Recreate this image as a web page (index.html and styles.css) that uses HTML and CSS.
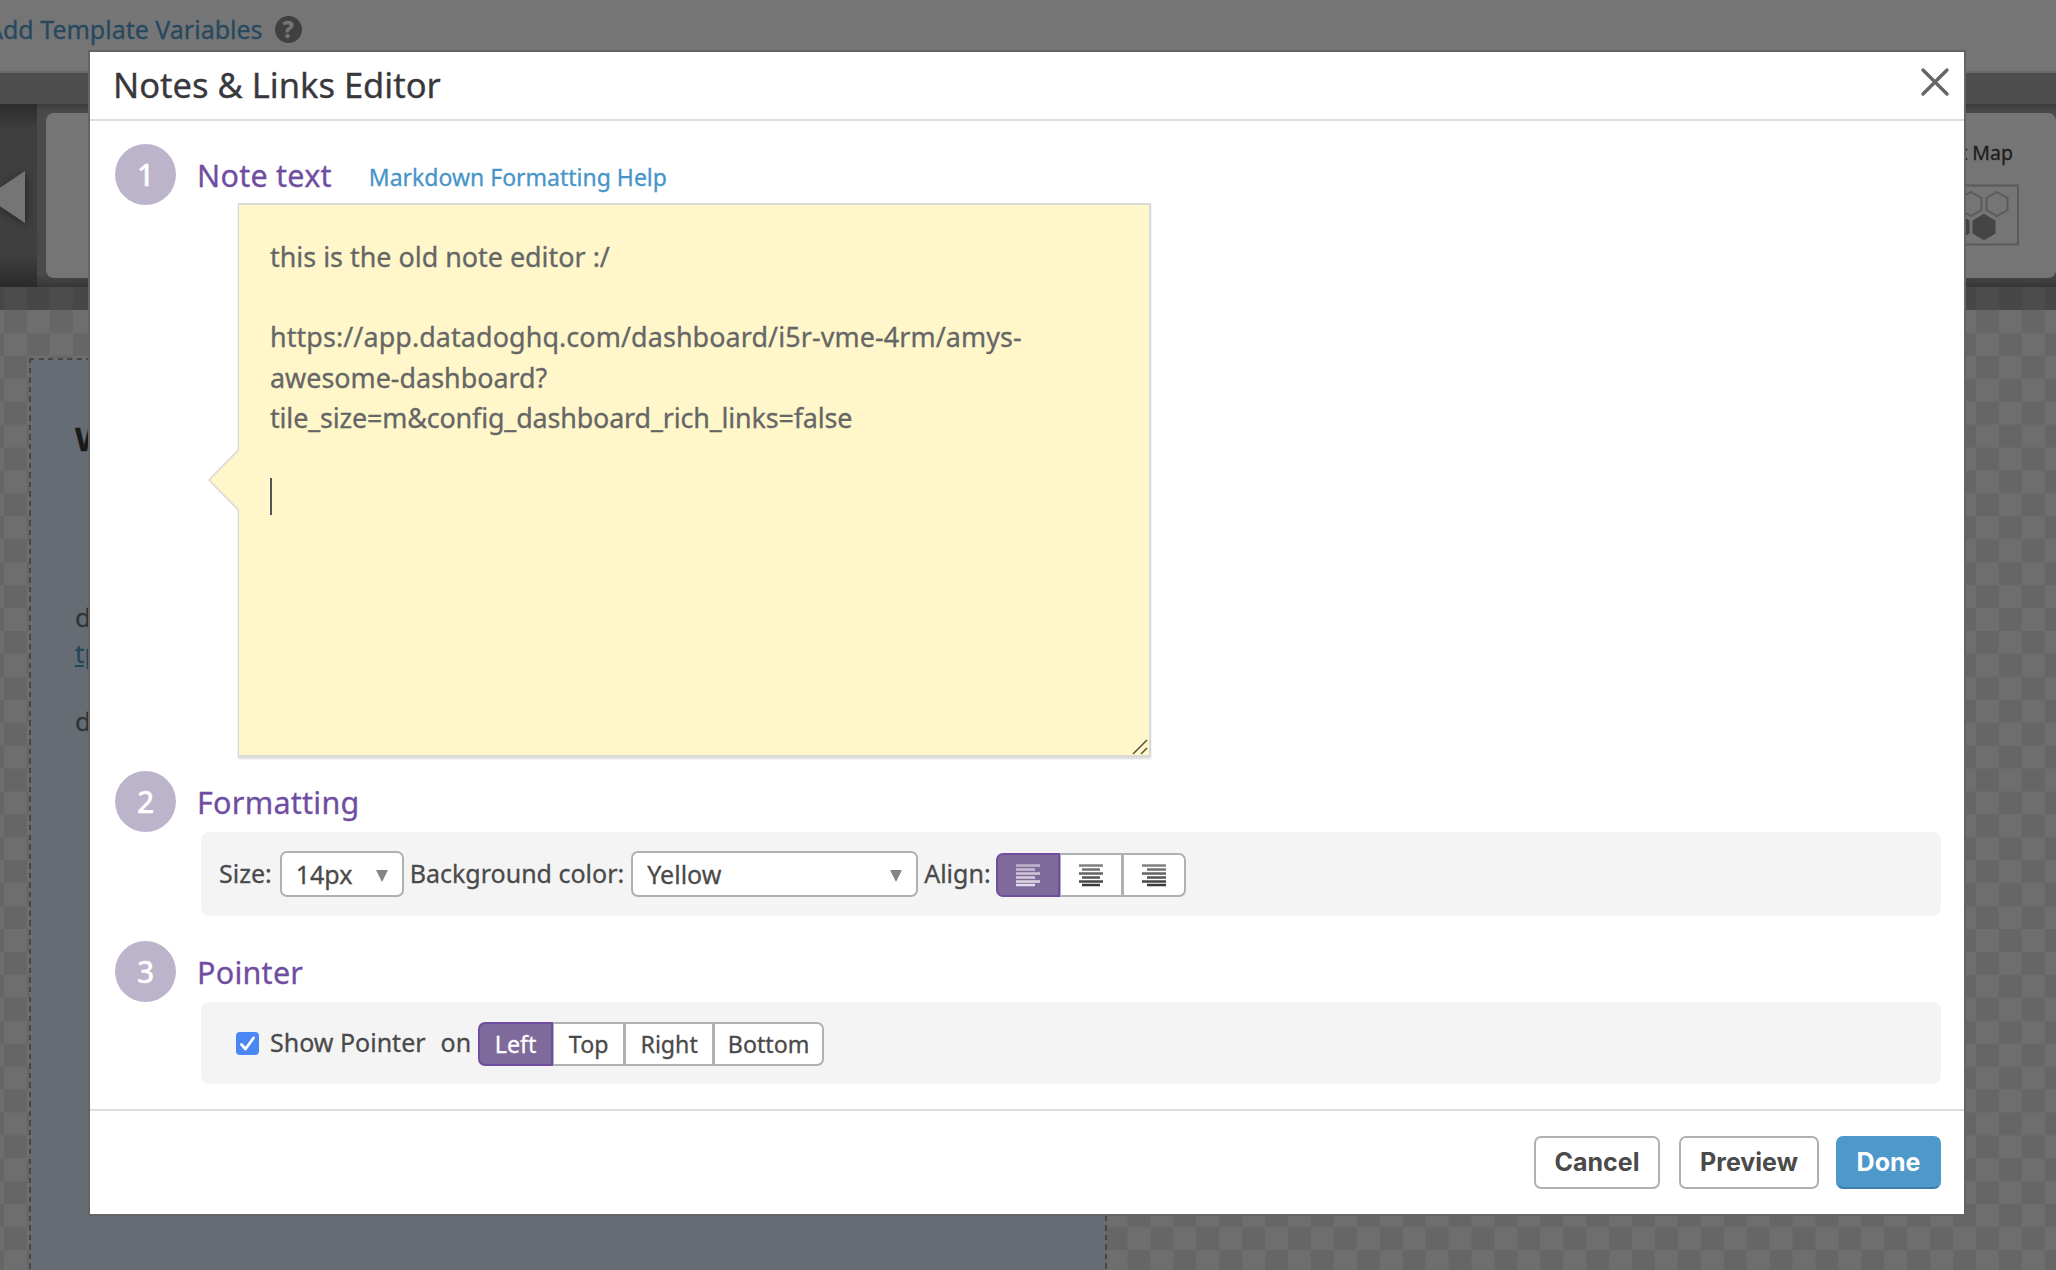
FILE: index.html
```
<!DOCTYPE html>
<html lang="en">
<head>
<meta charset="utf-8">
<title>Notes &amp; Links Editor</title>
<link rel="stylesheet" href="styles.css">
</head>
<body>
<div class="page">
  <div class="topbar">
    <span class="add-vars">Add Template Variables</span>
    <span class="help">?</span>
  </div>
  <div class="subbar"></div>
  <div class="tray">
    <div class="tray-prev">
      <svg width="37" height="183" viewBox="0 0 37 183"><path d="M25 67V119L-14 93Z" fill="#757575"/></svg>
    </div>
    <div class="tray-card">
      <span class="tray-label">Host Map</span>
      <svg class="tray-icon" width="76" height="62" viewBox="0 0 76 62" fill="none" stroke="#5a5a5a" stroke-width="2">
        <rect x="1" y="1.5" width="74" height="59"/>
        <path d="M28 8l10.500 6v12l-10.500 6l-10.500-6v-12zM54 8l10.500 6v12l-10.500 6l-10.500-6v-12z"/>
        <path d="M15 31l10.500 6v12l-10.500 6l-10.500-6v-12zM41 31l10.500 6v12l-10.500 6l-10.500-6v-12z" fill="#454545" stroke="#454545"/>
      </svg>
    </div>
  </div>
  <div class="board">
    <div class="board-shade"></div>
    <div class="widget">
      <div class="widget-title">W</div>
      <div class="widget-text">d</div>
      <div class="widget-link">tp</div>
      <div class="widget-text widget-last">d</div>
    </div>
  </div>
</div>

<div class="modal">
  <header class="modal-head">
    <h1>Notes &amp; Links Editor</h1>
    <svg width="30" height="30" viewBox="0 0 30 30" stroke="#666" stroke-width="3.400" stroke-linecap="round"><path d="M3 3L27 27M27 3L3 27"/></svg>
  </header>

  <main class="modal-body">
    <section>
      <div class="step"><span class="num">1</span><h2>Note text</h2><a class="md-help">Markdown Formatting Help</a></div>
      <div class="note">
        <svg class="note-pointer" width="33" height="64" viewBox="0 0 33 64"><path d="M33 1.500L31.500 2L2 32L31.500 62L33 62.500Z" fill="#fff7ca"/><path d="M31.500 2L2 32L31.500 62" fill="none" stroke="#d8d8d8" stroke-width="1.500"/></svg>
        <div class="note-text">this is the old note editor :/

<span class="url">https://app.datadoghq.com/dashboard/i5r-vme-4rm/amys-</span>
awesome-dashboard?
<span class="query">tile_size=m&amp;config_dashboard_rich_links=false</span>
</div>
        <div class="caret"></div>
        <svg class="grip" width="16" height="16" viewBox="0 0 16 16" stroke="#55533f" stroke-width="1.500"><path d="M1 15L15 1M9 15L15 9"/></svg>
      </div>
    </section>

    <section class="formatting">
      <div class="step"><span class="num">2</span><h2>Formatting</h2></div>
      <div class="panel panel-format">
        <span class="lbl">Size:</span>
        <span class="select size-select">14px<i></i></span>
        <span class="lbl">Background color:</span>
        <span class="select color-select">Yellow<i></i></span>
        <span class="lbl">Align:</span>
        <div class="group align-group">
          <span class="seg on"><svg width="24" height="23" viewBox="0 0 24 23"><defs><linearGradient id="light" gradientUnits="userSpaceOnUse" x1="0" y1="0" x2="0" y2="23"><stop offset="0" stop-color="#beb2cc"/><stop offset="1" stop-color="#e5e1eb"/></linearGradient></defs><path stroke="url(#light)" stroke-width="2.500" d="M0 1.500H24M0 5.500H19M0 9.500H24M0 13.500H19M0 17.500H24M0 21H19"/></svg></span>
          <span class="seg"><svg width="24" height="23" viewBox="0 0 24 23"><defs><linearGradient id="dark" gradientUnits="userSpaceOnUse" x1="0" y1="0" x2="0" y2="23"><stop offset="0" stop-color="#858585"/><stop offset="1" stop-color="#333"/></linearGradient></defs><path stroke="url(#dark)" stroke-width="2.500" d="M0 1.500H24M3 5.500H21M0 9.500H24M3 13.500H21M0 17.500H24M3 21H21"/></svg></span>
          <span class="seg"><svg width="24" height="23" viewBox="0 0 24 23"><path stroke="url(#dark)" stroke-width="2.500" d="M0 1.500H24M5 5.500H24M0 9.500H24M5 13.500H24M0 17.500H24M5 21H24"/></svg></span>
        </div>
      </div>
    </section>

    <section class="pointer">
      <div class="step"><span class="num">3</span><h2>Pointer</h2></div>
      <div class="panel panel-pointer">
        <span class="check"><svg width="23" height="23" viewBox="0 0 23 23" fill="none" stroke="#fff" stroke-width="2.800" stroke-linecap="round" stroke-linejoin="round"><path d="M5.500 12.500L9.500 17L17.500 6"/></svg></span>
        <span class="lbl show">Show Pointer</span>
        <span class="lbl">on</span>
        <div class="group side-group">
          <span class="seg on">Left</span><span class="seg">Top</span><span class="seg">Right</span><span class="seg">Bottom</span>
        </div>
      </div>
    </section>
  </main>

  <footer class="modal-foot">
    <button class="btn cancel">Cancel</button>
    <button class="btn preview">Preview</button>
    <button class="btn done">Done</button>
  </footer>
</div>
</body>
</html>
```
FILE: styles.css
```
* { box-sizing: border-box; }
body {
  margin: 0;
  width: 2056px;
  height: 1270px;
  overflow: hidden;
  position: relative;
  font-family: "Noto Sans", sans-serif;
  color: #4a4a4a;
  -webkit-text-stroke: .3px;
}
svg { display: block; }

/* dimmed dashboard */
.page { height: 1270px; display: flex; flex-direction: column; background: #757575; }
.topbar {
  height: 73px;
  border-bottom: 2px solid #686868;
  padding-bottom: 13px;
  display: flex;
  align-items: center;
  gap: 12px;
  margin-left: -13px;
}
.add-vars { font-size: 25px; color: #26495f; line-height: 34px; white-space: nowrap; }
.help {
  width: 27px; height: 27px; border-radius: 50%;
  background: #404040; color: #757575;
  font-size: 23px; font-weight: 800; line-height: 27px; text-align: center;
}
.subbar { height: 31px; background: #4e4e4e; }
.tray {
  height: 183px;
  display: flex;
  justify-content: space-between;
  background: linear-gradient(#3c3c3c, #4a4a4a 9px, #4a4a4a 170px, #353535);
}
.tray-prev {
  width: 37px;
  background: linear-gradient(#2c2c2c, #3f3f3f 26px, #404040 150px, #2a2a2a);
}
.tray-prev svg { filter: drop-shadow(1px 2px 4px #222); }
.tray-card {
  width: 2010px;
  margin: 9px 0;
  margin-left: 9px;
  flex: 1;
  border-radius: 8px;
  background: #757575;
  display: flex;
  flex-direction: column;
  align-items: flex-end;
  padding: 27px 37px 0 0;
}
.tray-label { font-size: 19.5px; line-height: 26px; margin-right: 6px; color: #1d1d1d; }
.tray-icon { margin-top: 18px; }
.board {
  flex: 1;
  overflow: hidden;
  background: conic-gradient(#666 25%, #6e6e6e 0 50%, #666 0 75%, #6e6e6e 0) 4px 0 / 45.87px 45.87px;
}
.board-shade { height: 23px; background: rgba(0, 0, 0, .3); }
.widget {
  width: 1078px;
  height: 920px;
  margin: 48px 0 0 29px;
  padding: 58px 0 0 46px;
  background:
    repeating-linear-gradient(90deg, #474747 0 5px, transparent 5px 9.530px) 0 0 / 100% 2px no-repeat,
    repeating-linear-gradient(#474747 0 5.500px, transparent 5.500px 9.530px) 0 0 / 2px 100% no-repeat,
    repeating-linear-gradient(#474747 0 5.500px, transparent 5.500px 9.530px) 100% 0 / 2px 100% no-repeat,
    #656c73;
}
.widget-title { font-size: 33px; font-weight: 700; line-height: 46px; color: #1a1a1a; }
.widget-text, .widget-link { font-size: 26px; line-height: 36px; color: #333; }
.widget-title + .widget-text { margin-top: 137px; }
.widget-link { color: #24465c; text-decoration: underline; }
.widget-last { margin-top: 32px; }

/* dialog */
.modal {
  position: absolute;
  left: 88px; top: 50px;
  width: 1878px; height: 1166px;
  border: 2px solid #646464;
  background: #fff;
  display: flex;
  flex-direction: column;
}
.modal-head {
  height: 69px;
  border-bottom: 2px solid #dcdcdc;
  padding: 0 14px 8px 23px;
  display: flex;
  align-items: center;
  justify-content: space-between;
}
h1 { margin: 7px 0 0; font-size: 34.5px; font-weight: 400; line-height: 48px; color: #38383c; }
.modal-body { flex: 1; padding: 23px 23px 0 25px; }
.step { height: 61px; display: flex; align-items: center; }
.num {
  width: 61px; height: 61px; border-radius: 50%;
  background: #bcb4ca; color: #fff;
  font-size: 30px; font-weight: 500; line-height: 61px; text-align: center;
}
h2 { margin: 0 0 0 21px; font-size: 30.5px; font-weight: 400; letter-spacing: .25px; color: #6f4ea1; }
.md-help { margin: 4px 0 0 37px; font-size: 23px; color: #4795c8; }
.note {
  position: relative;
  width: 913px; height: 554px;
  margin: -2px 0 0 123px;
  padding: 32px 31px;
  border: 2px solid #dadada;
  border-left-width: 1.500px;
  background: #fff7ca;
  box-shadow: 0 2px 2px rgba(0, 0, 0, .15);
}
.note-text { font-size: 26.900px; line-height: 40.200px; white-space: pre; color: #666; }
.url { letter-spacing: .1px; }
.query { letter-spacing: -.15px; }
.note-pointer { position: absolute; left: -32px; top: 243px; }
.caret { position: absolute; left: 31px; top: 273px; width: 2px; height: 37px; background: #555; }
.grip { position: absolute; right: 1px; bottom: 0; }

.formatting { margin-top: 14px; }
.pointer { margin-top: 25px; }
.panel {
  margin-left: 86px;
  border-radius: 8px;
  background: #f4f4f4;
  display: flex;
  align-items: center;
  font-size: 25px;
  white-space: nowrap;
}
.panel-format { height: 84px; padding: 0 0 0 18px; }
.panel-pointer { height: 82px; padding-left: 35px; }
.lbl { line-height: 34px; margin-bottom: 2px; }
.select {
  height: 46px;
  border: 2px solid #b0b0b0;
  border-radius: 7px;
  background: #fff;
  display: flex;
  align-items: center;
  justify-content: space-between;
  padding: 0 14px;
}
.select i { border: 6.500px solid transparent; border-top: 12px solid #858585; border-bottom: 0; margin-top: 4px; }
.size-select { width: 124px; margin: 0 6px 0 8px; }
.color-select { width: 287px; margin: 0 6px 0 7px; }
.group { height: 44px; display: flex; }
.seg {
  border: 2px solid #b0b0b0;
  background: #fff;
  display: flex;
  align-items: center;
  justify-content: center;
  font-size: 23.200px;
}
.seg + .seg { margin-left: -1px; }
.seg:first-child { border-radius: 7px 0 0 7px; }
.seg:last-child { border-radius: 0 7px 7px 0; }
.seg.on { background: #7f6b9b; border-color: #6f4ea1; color: #fff; position: relative; }
.align-group { margin: 2px 0 0 5px; }
.align-group .seg { width: 64px; }
.side-group { margin: 2px 0 0 7px; }
.side-group .seg:nth-child(1) { width: 75px; }
.side-group .seg:nth-child(2) { width: 73px; }
.side-group .seg:nth-child(3) { width: 90px; }
.side-group .seg:nth-child(4) { width: 111px; }
.check { width: 23px; height: 23px; border-radius: 4px; background: #4a87f2; }
.show { margin: 0 15px 2px 11px; }

.modal-foot {
  height: 105px;
  border-top: 2px solid #dcdcdc;
  padding: 25px 23px 0 0;
  display: flex;
  justify-content: flex-end;
}
.btn {
  height: 53px;
  padding: 0 0 2px;
  border: 2px solid #b0b0b0;
  border-radius: 7px;
  background: #fff;
  color: #4a4a4a;
  font: 700 25px Inter, sans-serif;
  -webkit-text-stroke: 0;
}
.cancel { width: 126px; margin-right: 19px; }
.preview { width: 140px; margin-right: 17px; }
.done { width: 105px; background: #4f98ca; border-color: #4f98ca #4f98ca #3c7dab; color: #fff; }
```
